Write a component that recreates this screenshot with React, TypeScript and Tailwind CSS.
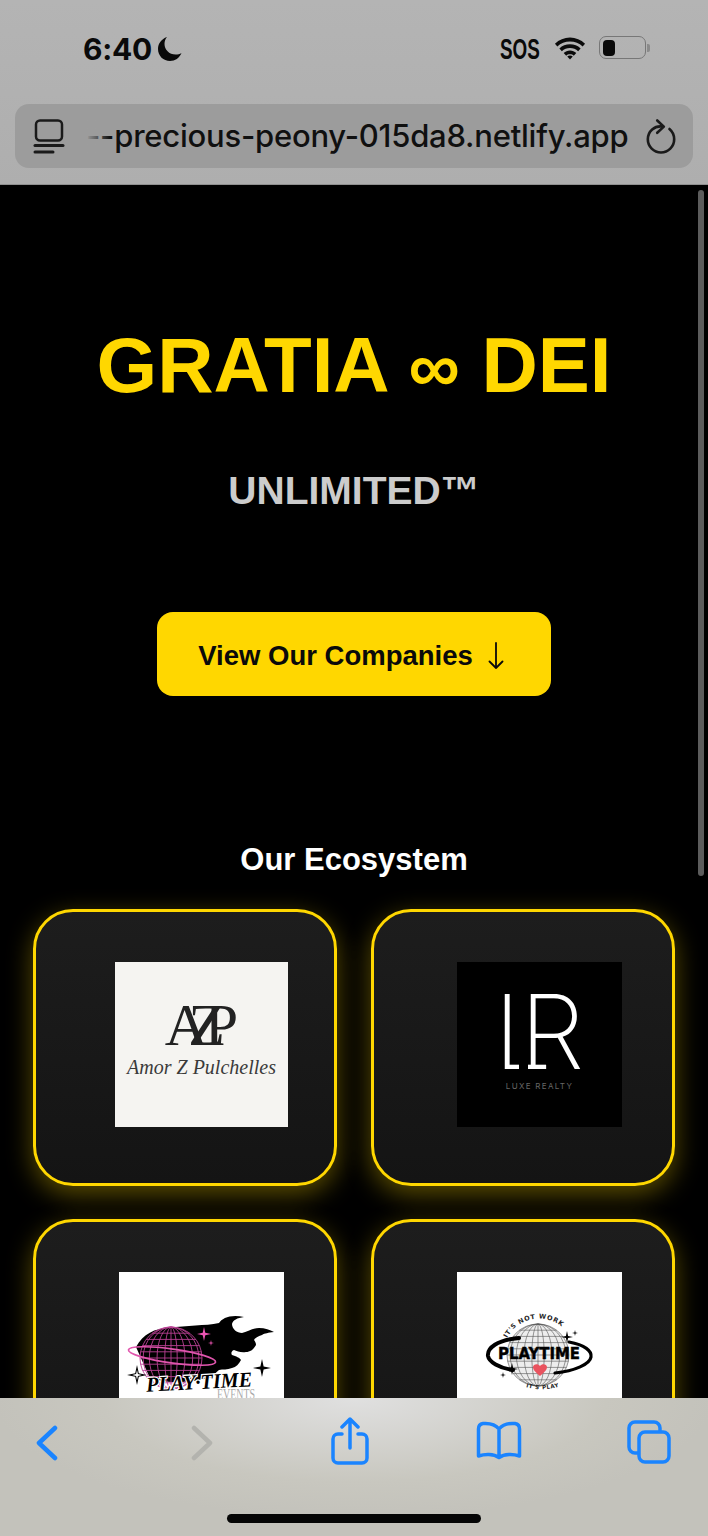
const Star = ({ x, y, r, fill }: { x: number; y: number; r: number; fill: string }) => {
  const k = r * 0.18;
  return (
    <path
      d={`M${x} ${y - r}L${x + k} ${y - k}L${x + r} ${y}L${x + k} ${y + k}L${x} ${y + r}L${x - k} ${y + k}L${x - r} ${y}L${x - k} ${y - k}Z`}
      fill={fill}
    />
  );
};

const Globe = ({ cx, cy, r, stroke, width }: { cx: number; cy: number; r: number; stroke: string; width: number }) => {
  const lats = [-0.8, -0.6, -0.4, -0.2, 0, 0.2, 0.4, 0.6, 0.8];
  const lons = [0.2, 0.45, 0.7, 0.9];
  return (
    <g fill="none" stroke={stroke} strokeWidth={width}>
      <circle cx={cx} cy={cy} r={r} />
      {lats.map((l) => {
        const half = Math.sqrt(1 - l * l) * r;
        return <line key={l} x1={cx - half} x2={cx + half} y1={cy + l * r} y2={cy + l * r} />;
      })}
      <line x1={cx} x2={cx} y1={cy - r} y2={cy + r} />
      {lons.map((l) => (
        <ellipse key={l} cx={cx} cy={cy} rx={l * r} ry={r} />
      ))}
    </g>
  );
};

const AmorLogo = () => (
  <div className="flex h-[165px] w-[173px] shrink-0 flex-col items-center bg-[#f5f4f1] pt-[36px] font-['Liberation_Serif',serif] text-[#222]">
    <div className="h-[54px] pr-[20px] text-[60px] leading-[54px] tracking-[-20px]">AZP</div>
    <div className="mt-[3px] whitespace-nowrap text-[20px] leading-[24px] italic text-[#3a3a3a]">Amor Z Pulchelles</div>
  </div>
);

const LuxeLogo = () => (
  <div className="relative flex h-[165px] w-[165px] shrink-0 flex-col bg-black pt-[22px] text-white">
    <div className="flex h-[96px] items-center pl-[37px] font-['Inter',sans-serif] text-[103px] leading-[80px] font-extralight tracking-[-32px]">
      LR
    </div>
    <div className="absolute top-[100px] left-[62px] h-[16px] w-[9px] bg-black" />
    <div className="mt-[1px] text-center font-['Inter',sans-serif] text-[8px] leading-[10px] tracking-[1.3px] whitespace-nowrap text-[#666]">LUXE REALTY</div>
  </div>
);

const PlayEventsLogo = () => (
  <div className="h-[165px] w-[165px] shrink-0 bg-white">
    <svg width="165" height="165" viewBox="0 0 165 165">
      <path
        d="M17 75C24 62 36 56 50 56C68 53 86 54 100 51C103 46 112 42 125 45C118 46 114 48 113 52C113 57 118 61 123 61C128 60 133 56 140 56C146 56 151 58 155 60C149 61 146 61 143 63C139 64 136 66 135 68C136 69 137 71 137 73C134 78 131 80 127 80C122 81 118 79 115 78C112 79 112 82 113 83C117 84 121 86 122 88C120 92 117 95 113 96C108 98 104 97 100 98C97 100 95 103 93 105C70 112 40 112 30 104Z"
        fill="#000"
      />
      <Globe cx={52} cy={86} r={31} stroke="#b83f92" width={0.9} />
      <ellipse cx="53" cy="84" rx="44" ry="7" fill="none" stroke="#e055ad" strokeWidth="1.7" transform="rotate(8 53 84)" />
      <Star x={85} y={62} r={7} fill="#ee55b4" />
      <Star x={92} y={71} r={3} fill="#ee55b4" />
      <Star x={143} y={96} r={9} fill="#000" />
      <Star x={18} y={103} r={10} fill="#000" />
      <Star x={18} y={103} r={5} fill="#fff" />
      <text x="98" y="127" fontFamily="'Liberation Serif', serif" fontSize="14" textLength="38" lengthAdjust="spacingAndGlyphs" fill="#aaa">
        EVENTS
      </text>
      <text x="27" y="117" fontFamily="'Liberation Serif', serif" fontWeight="700" fontStyle="italic" fontSize="21" textLength="106" lengthAdjust="spacingAndGlyphs" fill="#000" stroke="#fff" strokeWidth="2.4" paintOrder="stroke" transform="rotate(-3 80 108)">
        PLAY·TIME
      </text>
    </svg>
  </div>
);

const PlaytimeLogo = () => (
  <div className="h-[165px] w-[165px] shrink-0 bg-white">
    <svg width="165" height="165" viewBox="0 0 165 165">
      <defs>
        <path id="topArc" d="M50 66A36 36 0 0 1 110 60" />
        <path id="botArc" d="M69 115Q85 120 104 114" />
      </defs>
      <circle cx="81" cy="83" r="31" fill="#ededed" />
      <Globe cx={81} cy={83} r={31} stroke="#555" width={0.6} />
      <path d="M62 66C40 68 30 76 31 84C32 90 42 96 56 98" fill="none" stroke="#000" strokeWidth="4" strokeLinecap="round" />
      <path d="M112 70C128 73 135 79 134 85C133 92 118 99 98 101" fill="none" stroke="#000" strokeWidth="3.2" strokeLinecap="round" />
      <text x="82" y="87" textAnchor="middle" fontFamily="'DejaVu Sans', sans-serif" fontWeight="700" fontSize="15" textLength="82" lengthAdjust="spacingAndGlyphs" fill="#000" stroke="#000" strokeWidth="0.4">
        PLAYTIME
      </text>
      <path d="M83 104C77 99 76 97 76 95C76 92 81 91 83 94C85 91 90 92 90 95C90 97 89 99 83 104Z" fill="#e9535f" />
      <text fontFamily="'DejaVu Sans', sans-serif" fontWeight="700" fontSize="6.5" letterSpacing="0.6" fill="#222">
        <textPath href="#topArc">IT'S NOT WORK</textPath>
      </text>
      <text fontFamily="'DejaVu Sans', sans-serif" fontWeight="700" fontSize="5.5" letterSpacing="0.6" fill="#222">
        <textPath href="#botArc">IT'S PLAY</textPath>
      </text>
      <Star x={110} y={65} r={6} fill="#000" />
      <Star x={118} y={61} r={3} fill="#000" />
      <Star x={55} y={97} r={6} fill="#000" />
      <Star x={46} y={103} r={3} fill="#000" />
    </svg>
  </div>
);

const Card = ({ children }: { children: React.ReactNode }) => (
  <div className="flex h-[277px] justify-center rounded-[40px] border-[3.5px] border-[#ffd700] bg-gradient-to-b from-[#1d1d1d] to-[#141414] pt-[50px] pl-[33px] shadow-[0_8px_26px_rgba(255,215,0,0.36)]">
    {children}
  </div>
);

const StatusBar = () => (
  <div className="flex h-[104px] items-start pt-[32px] pl-[83px]">
    <span className="w-[69px] font-['Inter',sans-serif] text-[30px] leading-[34px] font-bold tracking-[-0.3px] text-[#0a0a0a]">6:40</span>
    <svg className="mt-[4px] ml-[5px]" width="26" height="26" viewBox="0 0 26 26">
      <path d="M10 1C4.5 3 1 7.5 1 13c0 7 5.5 12 12 12 5 0 9.5-3 11.5-8-1.6 1-3.8 1.6-5.8 1.6C12 18.600 7.500 13.500 7.500 8c0-2.600.8-5 2.500-7z" fill="#0a0a0a" />
    </svg>
    <div className="ml-[317px] w-[40px]">
      <span className="inline-block origin-left scale-x-[0.65] font-['Liberation_Sans',sans-serif] text-[29px] leading-[34px] font-bold text-[#0a0a0a]">SOS</span>
    </div>
    <svg className="mt-[5px] ml-[13px]" width="34" height="23" viewBox="0 0 36 26">
      <path d="M18 5c5.500 0 10.500 2.100 14.300 5.600l2.700-3C30.400 3.300 24.500.7 18 .7S5.600 3.300 1 7.600l2.700 3C7.500 7.100 12.500 5 18 5z" fill="#0a0a0a" />
      <path d="M18 12.500c3.500 0 6.700 1.300 9.200 3.500l2.800-3.100c-3.200-2.900-7.400-4.600-12-4.600s-8.800 1.700-12 4.600L8.800 16c2.500-2.200 5.700-3.500 9.200-3.500z" fill="#0a0a0a" />
      <path d="M18 19.500c1.700 0 3.200.6 4.300 1.600l2.800-3.100c-1.900-1.700-4.400-2.800-7.100-2.800s-5.200 1.100-7.100 2.800l2.800 3.100c1.100-1 2.600-1.600 4.300-1.600z" fill="#0a0a0a" />
      <path d="M18 25.500l3.100-3.400c-.8-.7-1.900-1.200-3.100-1.200s-2.300.5-3.100 1.200z" fill="#0a0a0a" />
    </svg>
    <div className="mt-[4px] ml-[12px] flex items-center">
      <div className="flex h-[23px] w-[47px] items-center rounded-[7px] border-[1.5px] border-[#777] px-[3px]">
        <div className="h-[16px] w-[12px] rounded-[4px] bg-[#0a0a0a]" />
      </div>
      <div className="ml-[1px] h-[8px] w-[3px] rounded-r-[2px] bg-[#8a8a8a]" />
    </div>
  </div>
);

const AddressBar = () => (
  <div className="relative mx-[15px] flex h-[64px] items-center rounded-[14px] bg-[#9c9c9c] pl-[18px]">
    <svg width="32" height="36" viewBox="0 0 32 36" fill="none" stroke="#1a1a1a" strokeWidth="3" strokeLinecap="round">
      <rect x="3" y="2.500" width="26" height="20" rx="4" strokeWidth="2.500" />
      <line x1="2" x2="30" y1="27.500" y2="27.500" />
      <line x1="2" x2="20" y1="34" y2="34" />
    </svg>
    <div className="relative ml-[21px] w-[544px]">
      <span className="font-['Inter',sans-serif] text-[31px] leading-[40px] font-medium tracking-[-0.23px] whitespace-nowrap text-[#101010]">--precious-peony-015da8.netlify.app</span>
      <div className="absolute top-0 left-0 h-full w-[24px] bg-gradient-to-r from-[#9c9c9c] to-transparent" />
    </div>
    <svg className="ml-[15px]" width="32" height="37" viewBox="0 0 34 38" fill="none" stroke="#1a1a1a" strokeWidth="2.800" strokeLinecap="round" strokeLinejoin="round">
      <path d="M19 8.500C10 7 3 13.500 3 22a14 14 0 0 0 28 0c0-4.500-2-8.500-5-11" />
      <path d="M13 2l7 6.500-7 6.500" />
    </svg>
  </div>
);

const ToolBar = () => (
  <div className="relative h-[138px] shrink-0 bg-[radial-gradient(ellipse_360px_120px_at_50%_0%,#e0e0e0,#c8c7bf_70%,#c3c2bb)]">
    <div className="flex items-start pt-[19px] pl-[36px] text-[#1a84ff]">
      <svg className="mt-[8px]" width="22" height="36" viewBox="0 0 22 36" fill="none" stroke="currentColor" strokeWidth="4.500" strokeLinecap="round" strokeLinejoin="round">
        <path d="M19 3L3 18l16 15" />
      </svg>
      <svg className="mt-[8px] ml-[133px] text-[#b3b3ae]" width="22" height="36" viewBox="0 0 22 36" fill="none" stroke="currentColor" strokeWidth="4.500" strokeLinecap="round" strokeLinejoin="round">
        <path d="M3 3l16 15L3 33" />
      </svg>
      <svg className="ml-[118px]" width="38" height="48" viewBox="0 0 38 48" fill="none" stroke="currentColor" strokeWidth="3.500" strokeLinecap="round" strokeLinejoin="round">
        <path d="M11 17H7a5 5 0 0 0-5 5v19a5 5 0 0 0 5 5h24a5 5 0 0 0 5-5V22a5 5 0 0 0-5-5h-4" />
        <path d="M19 31V3M11 10l8-8 8 8" />
      </svg>
      <svg className="mt-[4px] ml-[107px]" width="46" height="40" viewBox="0 0 46 40" fill="none" stroke="currentColor" strokeWidth="3.500" strokeLinecap="round" strokeLinejoin="round">
        <path d="M23 8C19 3 13 2 7 2.500 4 3 2.500 5 2.500 8v27c6-2 15-2.500 20.500 1.500 5.500-4 14.500-3.500 20.500-1.500V8c0-3-1.500-5-4.500-5.500C33 2 27 3 23 8zM23 8v28" />
      </svg>
      <svg className="mt-[3px] ml-[105px]" width="44" height="44" viewBox="0 0 44 44" fill="none" stroke="currentColor" strokeWidth="3.500" strokeLinejoin="round">
        <path d="M33 11V8a6 6 0 0 0-6-6H8a6 6 0 0 0-6 6v19a6 6 0 0 0 6 6h3" />
        <rect x="12" y="12" width="30" height="30" rx="6" />
      </svg>
    </div>
    <div className="absolute bottom-[13px] left-[227px] h-[9px] w-[254px] rounded-full bg-[#050505]" />
  </div>
);

export default function App() {
  return (
    <div className="flex h-[1536px] w-[708px] flex-col overflow-hidden bg-black font-['Liberation_Sans',Arial,sans-serif]">
      <header className="h-[185px] shrink-0 border-b border-[#8f8f8f] bg-gradient-to-b from-[#b4b4b4] to-[#aeaeae]">
        <StatusBar />
        <AddressBar />
      </header>

      <main className="relative min-h-0 flex-1 overflow-hidden bg-black">
        <div className="absolute top-[5px] right-[4px] h-[686px] w-[6px] rounded-full bg-[#5c5c5c]" />
        <div className="flex flex-col items-center pt-[134px]">
          <h1 className="text-[78px] leading-[92px] font-bold whitespace-nowrap text-[#ffd700]">
            GRATIA <span className="text-[72px]">∞</span> DEI
          </h1>
          <p className="mt-[55px] text-[39px] leading-[46px] font-bold text-[#cccccc]">UNLIMITED™</p>
          <button className="mt-[98px] flex h-[84px] w-[394px] items-center justify-center rounded-[16px] bg-[#ffd700] pt-[3px] pr-[6px] text-[27.5px] font-bold text-[#0a0a0a]">
            View Our Companies
            <svg className="ml-[15px]" width="16" height="27" viewBox="0 0 16 27" fill="none" stroke="#0a0a0a" strokeWidth="1.800" strokeLinecap="round" strokeLinejoin="round">
              <path d="M8 1v25M1.500 19.500L8 26l6.500-6.500" />
            </svg>
          </button>
          <h2 className="mt-[146px] text-[31px] leading-[36px] font-bold text-white">Our Ecosystem</h2>
        </div>
        <div className="mt-[31px] grid grid-cols-2 gap-x-[34px] gap-y-[33px] px-[33px]">
          <Card><AmorLogo /></Card>
          <Card><LuxeLogo /></Card>
          <Card><PlayEventsLogo /></Card>
          <Card><PlaytimeLogo /></Card>
        </div>
      </main>

      <ToolBar />
    </div>
  );
}
